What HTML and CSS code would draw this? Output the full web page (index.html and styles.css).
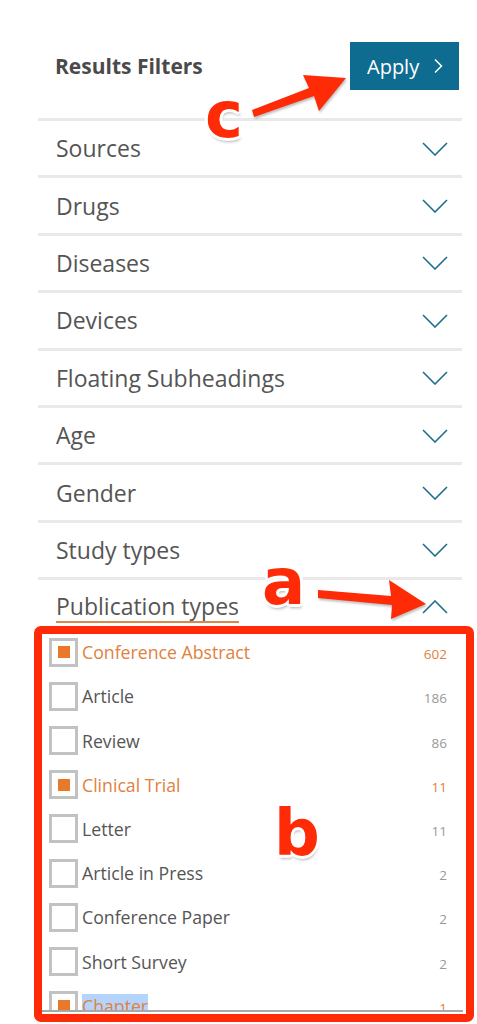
FILE: index.html
```html
<!DOCTYPE html>
<html lang="en">

<head>
    <meta charset="UTF-8">
    <meta name="viewport" content="width=device-width, initial-scale=1.0">
    <title>Results Filters</title>
    <link rel="stylesheet" href="styles.css">
</head>

<body>
    <div class="panel">
        <div class="panel-head">
            <h2>Results Filters</h2>
            <button class="apply-btn">Apply
                <svg width="10" height="16" viewBox="0 0 10 16"><path d="M2 1.5 L8.5 8 L2 14.5" /></svg>
            </button>
        </div>

        <ul class="filters">
            <li class="filter"><span>Sources</span><svg class="chev" viewBox="0 0 26 14"><path d="M1 1 L13 13 L25 1" /></svg></li>
            <li class="filter"><span>Drugs</span><svg class="chev" viewBox="0 0 26 14"><path d="M1 1 L13 13 L25 1" /></svg></li>
            <li class="filter"><span>Diseases</span><svg class="chev" viewBox="0 0 26 14"><path d="M1 1 L13 13 L25 1" /></svg></li>
            <li class="filter"><span>Devices</span><svg class="chev" viewBox="0 0 26 14"><path d="M1 1 L13 13 L25 1" /></svg></li>
            <li class="filter"><span>Floating Subheadings</span><svg class="chev" viewBox="0 0 26 14"><path d="M1 1 L13 13 L25 1" /></svg></li>
            <li class="filter"><span>Age</span><svg class="chev" viewBox="0 0 26 14"><path d="M1 1 L13 13 L25 1" /></svg></li>
            <li class="filter"><span>Gender</span><svg class="chev" viewBox="0 0 26 14"><path d="M1 1 L13 13 L25 1" /></svg></li>
            <li class="filter"><span>Study types</span><svg class="chev" viewBox="0 0 26 14"><path d="M1 1 L13 13 L25 1" /></svg></li>
            <li class="filter open"><span class="filter-name">Publication types</span><svg class="chev" viewBox="0 0 26 14"><path d="M1 13 L13 1 L25 13" /></svg></li>
        </ul>

        <ul class="types">
            <li class="type checked"><span class="box"></span><span class="type-name">Conference Abstract</span><span class="count">602</span></li>
            <li class="type"><span class="box"></span><span class="type-name">Article</span><span class="count">186</span></li>
            <li class="type"><span class="box"></span><span class="type-name">Review</span><span class="count">86</span></li>
            <li class="type checked"><span class="box"></span><span class="type-name">Clinical Trial</span><span class="count">11</span></li>
            <li class="type"><span class="box"></span><span class="type-name">Letter</span><span class="count">11</span></li>
            <li class="type"><span class="box"></span><span class="type-name">Article in Press</span><span class="count">2</span></li>
            <li class="type"><span class="box"></span><span class="type-name">Conference Paper</span><span class="count">2</span></li>
            <li class="type"><span class="box"></span><span class="type-name">Short Survey</span><span class="count">2</span></li>
            <li class="type checked"><span class="box"></span><span class="type-name selected">Chapter</span><span class="count">1</span></li>
        </ul>
    </div>

    <!-- annotations drawn on top of the screenshot -->
    <div class="mark-box"></div>
    <svg class="arrows" width="477" height="1024" viewBox="0 0 477 1024">
        <polygon points="252,110 309,88 303,75 346,78 319,111 314,96 254,117" />
        <polygon points="318,590 391,596 389,580 426,604 391,619 392,605 318,598" />
    </svg>
    <span class="letter letter-c">c</span>
    <span class="letter letter-a">a</span>
    <span class="letter letter-b">b</span>
</body>

</html>
```

FILE: styles.css
```css
body {
    margin: 0;
    background-color: white;
    font-family: 'Open Sans', 'Noto Sans', sans-serif;
    color: #555;
    position: relative;
    overflow: hidden;
    height: 1024px;
}

.panel {
    width: 424px;
    margin-left: 38px;
    padding-top: 42px;
}

.panel-head {
    display: flex;
    justify-content: space-between;
    align-items: center;
    height: 48px;
    padding: 0 3px 0 17px;
    margin-bottom: 28px;
}

.panel-head h2 {
    margin: 0;
    font-size: 21px;
    font-weight: 700;
    color: #4a4a4a;
}

.apply-btn {
    display: flex;
    align-items: center;
    gap: 14px;
    height: 48px;
    width: 109px;
    padding: 0 0 0 17px;
    border: none;
    background-color: #0e6c90;
    color: white;
    font-family: inherit;
    font-size: 20px;
}

.apply-btn svg path {
    fill: none;
    stroke: white;
    stroke-width: 1.5;
}

ul {
    list-style: none;
    margin: 0;
    padding: 0;
}

.filter {
    display: flex;
    justify-content: space-between;
    align-items: center;
    height: 54.4px;
    border-top: 3px solid #e9e9e9;
    padding: 0 14px 0 18px;
    font-size: 23px;
    color: #555;
}

.filter.open {
    align-items: flex-start;
    padding-top: 11px;
    box-sizing: border-box;
    height: 53px;
}

.filter-name {
    line-height: 30px;
    border-bottom: 2px solid #d98a4a;
}

.chev {
    width: 26px;
    height: 14px;
    margin-top: 1px;
}

.filter.open .chev {
    margin-top: 9px;
}

.chev path {
    fill: none;
    stroke: #1f6f8b;
    stroke-width: 1.6;
}

.types {
    margin-left: 4px;
    width: 421px;
    height: 380px;
    overflow: hidden;
    border-bottom: 2px solid #a9a9a9;
}

.type {
    display: flex;
    align-items: center;
    height: 44.2px;
    padding: 0 16px 0 7px;
    font-size: 17.7px;
    color: #555;
}

.box {
    width: 23px;
    height: 23px;
    border: 3px solid #c2c2c2;
    display: flex;
    align-items: center;
    justify-content: center;
    margin-right: 4px;
    flex-shrink: 0;
}

.type.checked .box::after {
    content: '';
    width: 12px;
    height: 12px;
    background-color: #e8782a;
}

.type-name {
    flex: 1;
}

.type.checked .type-name {
    color: #e0813e;
}

.type-name.selected {
    flex: none;
    background-color: #b5d4fb;
    margin-right: auto;
}

.count {
    font-size: 13.5px;
    color: #999;
    margin-top: 4px;
}

.type.checked .count {
    color: #e0813e;
}

/* annotations */
.mark-box {
    position: absolute;
    left: 34px;
    top: 626px;
    width: 424px;
    height: 380px;
    border: 8px solid #ff2a06;
    border-radius: 7px;
}

.arrows {
    position: absolute;
    left: 0;
    top: 0;
}

.arrows polygon {
    fill: #ff2a06;
    filter: drop-shadow(1px 2px 1px rgba(0, 0, 0, 0.25));
}

.letter {
    position: absolute;
    font-family: 'DejaVu Sans', sans-serif;
    font-weight: 700;
    font-size: 64px;
    line-height: 1;
    color: #ff2a06;
    text-shadow:
        3px 0 0 white, -3px 0 0 white, 0 3px 0 white, 0 -3px 0 white,
        2px 2px 0 white, -2px 2px 0 white, 2px -2px 0 white, -2px -2px 0 white,
        1px 4px 3px rgba(0, 0, 0, 0.3);
}

.letter-c {
    left: 205px;
    top: 83px;
}

.letter-a {
    left: 262px;
    top: 550px;
}

.letter-b {
    left: 274px;
    top: 801px;
}
```
